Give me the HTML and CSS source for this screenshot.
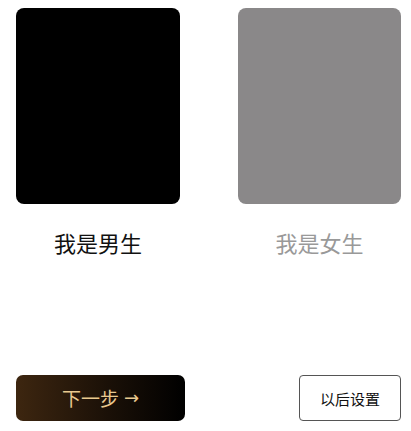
FILE: index.html
```html
<!DOCTYPE html>
<html lang="zh-CN">
<head>
<meta charset="utf-8">
<title>选择性别</title>
<link rel="stylesheet" href="styles.css">
</head>
<body>
<div class="page">
  <div class="choices">
    <div class="choice">
      <div class="card card-male"></div>
      <div class="label label-active">我是男生</div>
    </div>
    <div class="choice choice-right">
      <div class="card card-female"></div>
      <div class="label label-muted">我是女生</div>
    </div>
  </div>
  <div class="actions">
    <button class="btn-next"><span class="next-text">下一步</span><span class="arrow">→</span></button>
    <button class="btn-later">以后设置</button>
  </div>
</div>
</body>
</html>
```
FILE: styles.css
```css
html, body {
  margin: 0;
  padding: 0;
  background: #ffffff;
}
body {
  font-family: "Noto Sans CJK SC", "Noto Sans", sans-serif;
}
.page {
  width: 411px;
  height: 431px;
  box-sizing: border-box;
  padding: 8px 10px 10px 16px;
  display: flex;
  flex-direction: column;
  justify-content: space-between;
}
.choices {
  display: flex;
  gap: 58px;
}
.choice {
  width: 164px;
  display: flex;
  flex-direction: column;
  align-items: center;
}
.choice-right {
  width: 163px;
}
.card {
  width: 100%;
  height: 196px;
  border-radius: 8px;
}
.card-male {
  background: #000000;
}
.card-female {
  background: #8a8889;
}
.label {
  margin-top: 23px;
  font-size: 22px;
  line-height: 30px;
}
.label-active {
  color: #111111;
}
.label-muted {
  color: #999999;
}
.actions {
  display: flex;
  justify-content: space-between;
  align-items: center;
}
.btn-next {
  width: 169px;
  height: 46px;
  border: none;
  border-radius: 7px;
  background: linear-gradient(90deg, #3d2610 0%, #1a1007 55%, #000000 100%);
  color: #e9c98f;
  font-family: inherit;
  font-size: 19px;
  padding: 0 0 2px;
  display: flex;
  align-items: center;
  justify-content: center;
  gap: 5px;
}
.arrow {
  font-family: "DejaVu Sans", sans-serif;
  font-size: 18px;
}
.btn-later {
  width: 102px;
  height: 46px;
  box-sizing: border-box;
  border: 1px solid #555555;
  border-radius: 4px;
  background: #ffffff;
  color: #111111;
  font-family: inherit;
  font-size: 15px;
  padding: 0;
}
```
